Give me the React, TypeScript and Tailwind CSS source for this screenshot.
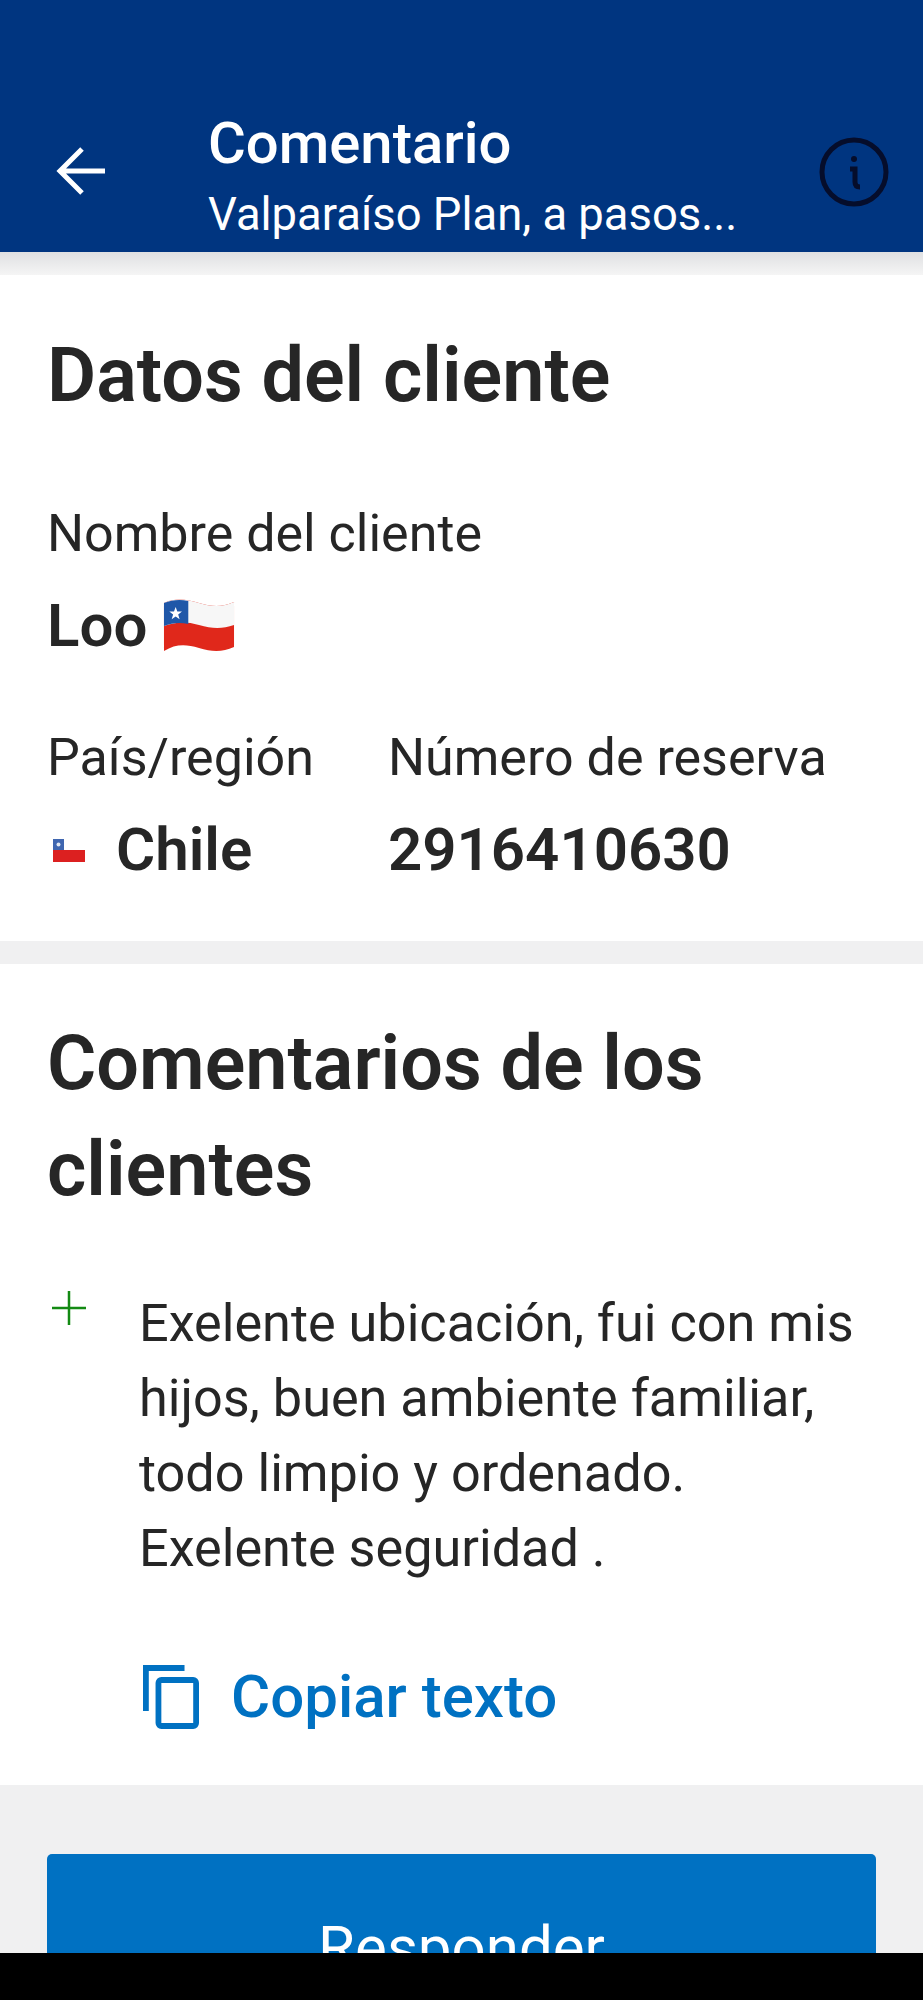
const font = "font-['Roboto',sans-serif]";

const ChileFlagWavy = () => (
  <svg width="72" height="58" viewBox="0 0 74 58" preserveAspectRatio="none" className="shrink-0">
    <path d="M1 6c12-5 22-4 36 0s24 4 36-1v45c-12 5-22 5-36 1S13 47 1 54z" fill="#e0281b" />
    <path d="M1 6c12-5 22-4 36 0s24 4 36-1v23c-12 4-22 4-36 0S13 25 1 29z" fill="#f7f7f7" />
    <path d="M1 6c8-3 16-4 25-2v23c-9-2-17-1-25 2z" fill="#1f57a8" />
    <path d="M13 10l1.700 4.500h4.800l-3.900 3 1.500 4.700-4.100-2.800-4.100 2.800 1.500-4.700-3.900-3h4.800z" fill="#fff" />
  </svg>
);

const ChileFlagSmall = () => (
  <svg width="32" height="23" viewBox="0 0 32 23" className="shrink-0">
    <rect width="32" height="23" fill="#fff" />
    <rect y="11" width="32" height="12" fill="#dc2020" />
    <rect width="11" height="11" fill="#3f66b0" />
    <circle cx="5.500" cy="5.500" r="2" fill="#dfe6f2" />
  </svg>
);

const Field = ({ label, children }: { label: string; children: React.ReactNode }) => (
  <div>
    <p className="text-[52px] leading-[64px] text-[#262626]">{label}</p>
    <div className="mt-[28px] flex items-center text-[60px] leading-[64px] font-semibold text-[#262626]">
      {children}
    </div>
  </div>
);

export default function App() {
  return (
    <div className={`${font} flex h-[2000px] w-[923px] flex-col overflow-hidden bg-[#f0f0f1]`}>
      <div className="min-h-0 flex-1 overflow-hidden">
        {/* app bar */}
        <header className="flex h-[252px] items-end bg-[#003580] pr-[34px] pb-[9px] text-white">
          <div className="flex w-[208px] shrink-0 justify-start pb-[48px] pl-[56px]">
            <svg width="50" height="48" viewBox="0 0 50 48" fill="none" stroke="#fff" strokeWidth="5">
              <path d="M49 24H4M26 2 4 24l22 22" />
            </svg>
          </div>
          <div className="min-w-0 flex-1">
            <h1 className="text-[58px] leading-[68px] font-medium">Comentario</h1>
            <p className="mt-[10px] text-[45.400px] leading-[56px]">Valparaíso Plan, a pasos...</p>
          </div>
          <svg width="70" height="70" viewBox="0 0 70 70" fill="none" stroke="#050d2b" strokeWidth="5" className="mb-[36px] shrink-0">
            <circle cx="35" cy="35" r="32" />
            <path d="M31 32h5v13q0 5 5 5" />
            <circle cx="35" cy="22" r="3" fill="#050d2b" stroke="none" />
          </svg>
        </header>
        <div className="h-[23px] bg-gradient-to-b from-[#dfe0e2] to-[#f5f5f5]" />

        {/* customer details */}
        <section className="h-[666px] bg-white px-[47px] pt-[60px]">
          <h2 className="text-[75.500px] leading-[80px] font-semibold text-[#262626]">Datos del cliente</h2>
          <p className="mt-[87px] text-[52px] leading-[64px] text-[#262626]">Nombre del cliente</p>
          <div className="mt-[28px] flex items-center gap-[16px] text-[60px] leading-[64px] font-semibold text-[#262626]">
            Loo <ChileFlagWavy />
          </div>
          <div className="mt-[68px] flex">
            <div className="w-[341px] shrink-0">
              <Field label="País/región">
                <span className="ml-[6px] mr-[31px]"><ChileFlagSmall /></span>
                Chile
              </Field>
            </div>
            <Field label="Número de reserva">2916410630</Field>
          </div>
        </section>

        <div className="h-[23px]" />

        {/* customer comments */}
        <section className="h-[821px] bg-white px-[47px] pt-[46px]">
          <h2 className="text-[75.500px] leading-[106px] font-semibold text-[#262626]">
            Comentarios de los
            <br />
            clientes
          </h2>
          <div className="mt-[64px] flex">
            <div className="w-[92px] shrink-0 pt-[4px]">
              <svg width="36" height="36" viewBox="0 0 36 36" stroke="#138a13" strokeWidth="2.500" className="ml-[4px]">
                <path d="M18 1v34M1 18h34" />
              </svg>
            </div>
            <p className="text-[52.200px] leading-[75px] text-[#262626]">
              Exelente ubicación, fui con mis
              <br />
              hijos, buen ambiente familiar,
              <br />
              todo limpio y ordenado.
              <br />
              Exelente seguridad .
            </p>
          </div>
          <div className="mt-[79px] ml-[96px] flex items-center gap-[30px] text-[60px] leading-[64px] font-medium text-[#0071c2]">
            <svg width="56" height="64" viewBox="0 0 58 64" preserveAspectRatio="none" fill="none" stroke="#0071c2" strokeWidth="6" className="mr-[2px] shrink-0">
              <path d="M3 46V3h40" />
              <rect x="16" y="15" width="39" height="46" rx="3" />
            </svg>
            Copiar texto
          </div>
        </section>

        {/* reply button, cut off by the nav bar */}
        <div className="px-[47px] pt-[69px]">
          <div className="flex h-[200px] justify-center rounded-[5px] bg-[#0071c2] pt-[62px] text-[60px] leading-[64px] font-normal text-white">
            Responder
          </div>
        </div>
      </div>
      <div className="h-[47px] shrink-0 bg-black" />
    </div>
  );
}
